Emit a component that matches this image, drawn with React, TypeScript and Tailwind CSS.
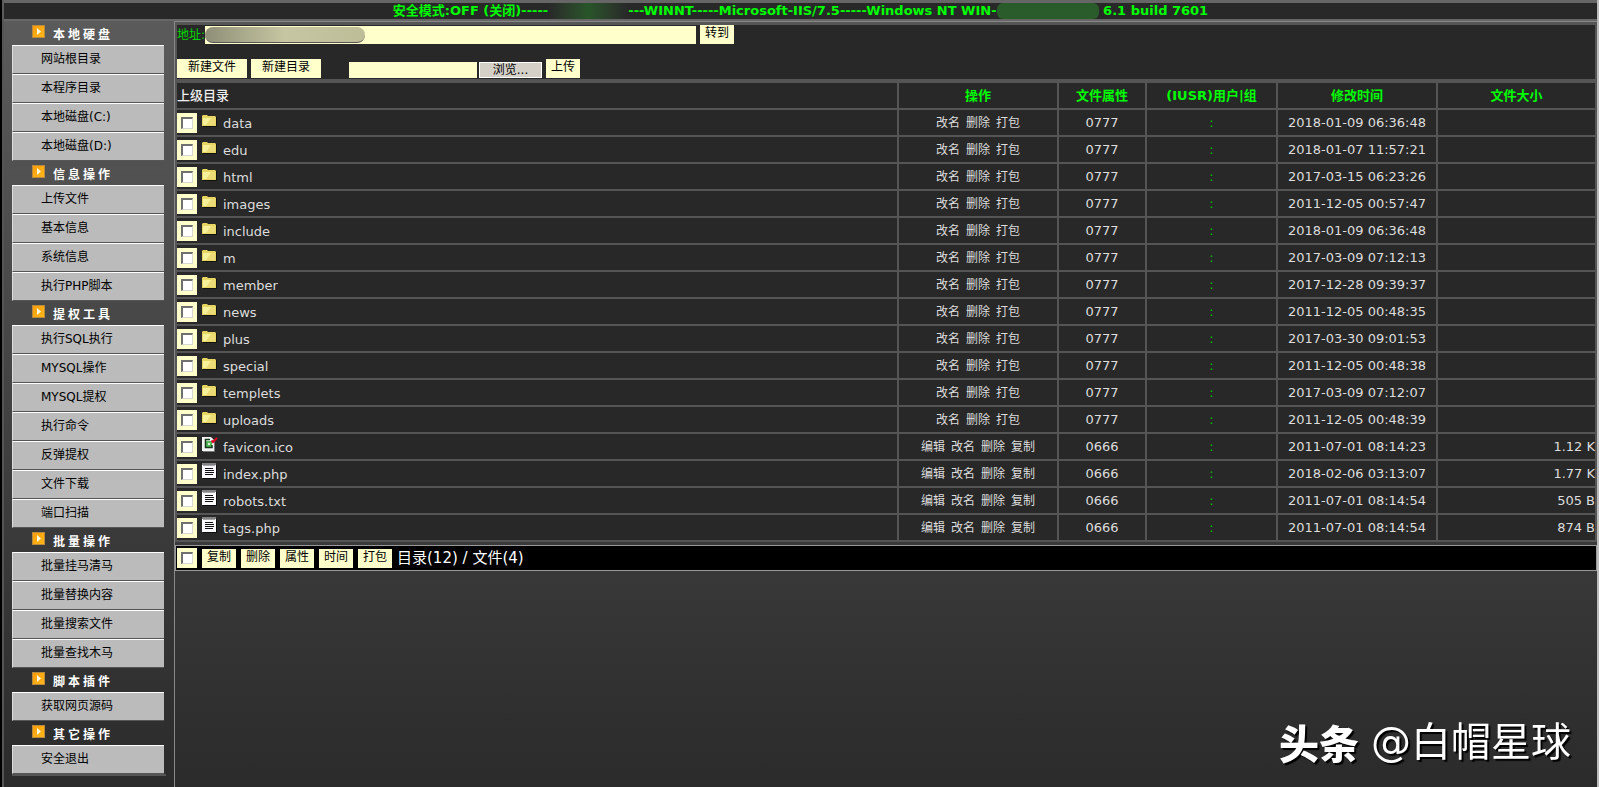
import { useState } from 'react'

const MENU = [
  { title: '本地硬盘', items: ['网站根目录', '本程序目录', '本地磁盘(C:)', '本地磁盘(D:)'] },
  { title: '信息操作', items: ['上传文件', '基本信息', '系统信息', '执行PHP脚本'] },
  {
    title: '提权工具',
    items: ['执行SQL执行', 'MYSQL操作', 'MYSQL提权', '执行命令', '反弹提权', '文件下载', '端口扫描'],
  },
  { title: '批量操作', items: ['批量挂马清马', '批量替换内容', '批量搜索文件', '批量查找木马'] },
  { title: '脚本插件', items: ['获取网页源码'] },
  { title: '其它操作', items: ['安全退出'] },
]

type Kind = 'dir' | 'ico' | 'text'

interface Entry {
  name: string
  kind: Kind
  time: string
  size?: string
}

const ENTRIES: Entry[] = [
  { name: 'data', kind: 'dir', time: '2018-01-09 06:36:48' },
  { name: 'edu', kind: 'dir', time: '2018-01-07 11:57:21' },
  { name: 'html', kind: 'dir', time: '2017-03-15 06:23:26' },
  { name: 'images', kind: 'dir', time: '2011-12-05 00:57:47' },
  { name: 'include', kind: 'dir', time: '2018-01-09 06:36:48' },
  { name: 'm', kind: 'dir', time: '2017-03-09 07:12:13' },
  { name: 'member', kind: 'dir', time: '2017-12-28 09:39:37' },
  { name: 'news', kind: 'dir', time: '2011-12-05 00:48:35' },
  { name: 'plus', kind: 'dir', time: '2017-03-30 09:01:53' },
  { name: 'special', kind: 'dir', time: '2011-12-05 00:48:38' },
  { name: 'templets', kind: 'dir', time: '2017-03-09 07:12:07' },
  { name: 'uploads', kind: 'dir', time: '2011-12-05 00:48:39' },
  { name: 'favicon.ico', kind: 'ico', time: '2011-07-01 08:14:23', size: '1.12 K' },
  { name: 'index.php', kind: 'text', time: '2018-02-06 03:13:07', size: '1.77 K' },
  { name: 'robots.txt', kind: 'text', time: '2011-07-01 08:14:54', size: '505 B' },
  { name: 'tags.php', kind: 'text', time: '2011-07-01 08:14:54', size: '874 B' },
]

const DIR_ACTIONS = ['改名', '删除', '打包']
const FILE_ACTIONS = ['编辑', '改名', '删除', '复制']

function ArrowIcon() {
  return (
    <svg className="w-[13px] h-[13px] shrink-0" viewBox="0 0 13 13" aria-hidden="true">
      <defs>
        <linearGradient id="arrow-fill" x1="0" y1="0" x2="1" y2="1">
          <stop offset="0" stopColor="#ff9c08" />
          <stop offset="1" stopColor="#ffb91c" />
        </linearGradient>
      </defs>
      <rect x="0.5" y="0.5" width="12" height="12" fill="url(#arrow-fill)" stroke="#b98a3c" />
      <path d="M5 3v7l4-3.5z" fill="#fffbe0" />
    </svg>
  )
}

function EntryIcon({ kind }: { kind: Kind }) {
  if (kind === 'dir') {
    return (
      <svg className="w-4 h-4 mt-px shrink-0 self-start" viewBox="0 0 16 16" aria-hidden="true">
        <path d="M1 14.500h13.500V5" fill="none" stroke="#111" />
        <path d="M0 4l1-1h4l1 1h7l1 1v9H0z" fill="#e6d560" />
        <path d="M1 6h12v7H1z" fill="#f8f19b" />
        <path d="M9 6h4v7H4z" fill="#ecdc78" />
      </svg>
    )
  }
  if (kind === 'ico') {
    return (
      <svg className="w-4 h-4 mt-px shrink-0 self-start" viewBox="0 0 16 16" aria-hidden="true">
        <path d="M0 1h9l3 3v11H0z" fill="#f4f4f4" />
        <path d="M12.500 5v10.500H1" fill="none" stroke="#777" />
        <path d="M4 5h6v6H4z" fill="#58b85c" />
        <path d="M8 3.500H3.500v8H10V9" fill="none" stroke="#153b1a" strokeWidth="1.500" />
        <path d="M6 7h2v2H6z" fill="#d9f3da" />
        <path d="M9.500 4.500l1.500 1.500L15 2" fill="none" stroke="#e00020" strokeWidth="2" />
      </svg>
    )
  }
  return (
    <svg className="w-4 h-4 mt-px shrink-0 self-start" viewBox="0 0 16 16" aria-hidden="true">
      <path d="M1 15.500h13.500V2" fill="none" stroke="#0d0d0d" />
      <path d="M0 2h14v13H0z" fill="#fafaff" />
      <path d="M1 0v2M3 0v2M5 0v2M7 0v2M9 0v2M11 0v2M13 0v2" stroke="#ddd" />
      <path d="M2 2v1M4 2v1M6 2v1M8 2v1M10 2v1M12 2v1" stroke="#555" />
      <path d="M3 5.500h8M3 7.500h9M3 9.500h9M3 11.500h8" stroke="#111" />
    </svg>
  )
}

function Tick({ label, ...rest }: { label: string; checked: boolean; onChange: () => void }) {
  return (
    <label className="w-5 h-5 shrink-0 bg-[#ffffcc] flex items-center justify-center">
      <input
        type="checkbox"
        aria-label={label}
        className="appearance-none w-3 h-3 bg-white border border-t-2 border-l-2 border-t-[#707070] border-l-[#707070] border-r-[#d8d8d0] border-b-[#d8d8d0] checked:bg-[#333]"
        {...rest}
      />
    </label>
  )
}

function CreamButton({ children, wide }: { children: string; wide?: boolean }) {
  return (
    <button
      className={`${wide ? 'w-[70px]' : 'w-[34px]'} h-[19px] shrink-0 bg-[#ffffcc] text-black text-xs leading-4 pb-[3px]`}
    >
      {children}
    </button>
  )
}

function Sidebar() {
  return (
    <nav className="w-[170px] shrink-0 px-2">
      {MENU.map((group) => (
        <section key={group.title} className="last:border-b-2 border-[#555]">
          <h2 className="h-6 flex items-start gap-2 pl-5 pt-1 text-white text-xs font-bold tracking-[3px]">
            <ArrowIcon />
            <span className="leading-5">{group.title}</span>
          </h2>
          {group.items.map((item) => (
            <a
              key={item}
              href="#"
              className="block h-[29px] w-[152px] pl-7 bg-[#bbb] border-t border-t-white border-l border-l-[#ddd] border-b border-b-[#555] text-black text-xs leading-[27px]"
            >
              {item}
            </a>
          ))}
        </section>
      ))}
    </nav>
  )
}

function FileTable({ picked, toggle }: { picked: string[]; toggle: (name: string) => void }) {
  const head = 'border-l-2 border-[#555] text-[#00ff00] text-[13px] font-bold p-0'
  const cell = 'border-l-2 border-[#555] text-center'
  return (
    <table className="w-full table-fixed border-separate border-spacing-0 bg-[#282828]">
      <colgroup>
        <col />
        <col className="w-[160px]" />
        <col className="w-[88px]" />
        <col className="w-[131px]" />
        <col className="w-[160px]" />
        <col className="w-[159px]" />
      </colgroup>
      <thead>
        <tr className="h-[27px] [&>th]:border-b-2">
          <th className="border-[#555] text-left text-[13px] font-medium">
            <a href="#" className="text-[#eee]">上级目录</a>
          </th>
          <th className={head}>操作</th>
          <th className={head}>文件属性</th>
          <th className={head}>(IUSR)用户|组</th>
          <th className={head}>修改时间</th>
          <th className={head}>文件大小</th>
        </tr>
      </thead>
      <tbody>
        {ENTRIES.map((entry) => (
          <tr key={entry.name} className="h-[27px] [&>td]:border-b-2 [&>td]:p-0">
            <td className="border-[#555]">
              <div className="flex items-center gap-[5px]">
                <Tick
                  label={entry.name}
                  checked={picked.includes(entry.name)}
                  onChange={() => toggle(entry.name)}
                />
                <EntryIcon kind={entry.kind} />
                <a href="#" className="leading-5 pt-[3px]">{entry.name}</a>
              </div>
            </td>
            <td className={cell}>
              <div className="flex justify-center gap-[6px] text-xs">
                {(entry.kind === 'dir' ? DIR_ACTIONS : FILE_ACTIONS).map((action) => (
                  <a key={action} href="#">{action}</a>
                ))}
              </div>
            </td>
            <td className={cell}>{entry.kind === 'dir' ? '0777' : '0666'}</td>
            <td className={`${cell} text-[#00c000]`}>:</td>
            <td className={cell}>{entry.time}</td>
            <td className="border-l-2 border-[#555] text-right">{entry.size}</td>
          </tr>
        ))}
      </tbody>
    </table>
  )
}

export default function App() {
  const [picked, setPicked] = useState<string[]>([])

  const toggle = (name: string) =>
    setPicked((prev) => (prev.includes(name) ? prev.filter((n) => n !== name) : [...prev, name]))
  const toggleAll = () =>
    setPicked((prev) => (prev.length === ENTRIES.length ? [] : ENTRIES.map((e) => e.name)))

  return (
    <div className="min-h-screen flex flex-col bg-linear-to-b from-[#5c5c5c] to-[#2b2b2b] border-l-2 border-l-black border-r-2 border-r-[#bbb] text-[#ddd] text-[13px] font-['DejaVu_Sans','Noto_Sans_CJK_SC',sans-serif]">
      {/* Server summary */}
      <header className="h-[21px] ml-[2px] flex items-center justify-center whitespace-pre border-t-3 border-b-2 border-[#666] bg-[#282828] text-[#00ff00] text-[13px] leading-4 font-bold">
        <span>安全模式:OFF (关闭)-----</span>
        <span className="w-[80px] h-4 bg-linear-to-r from-[#282828] via-[#28552a] to-[#282828]" />
        <span>---WINNT-----Microsoft-IIS/7.5-----Windows NT WIN-</span>
        <span className="w-[102px] h-4 rounded-md bg-[#295c2a]" />
        <span> 6.1 build 7601</span>
      </header>

      <div className="flex flex-1 border-l-2 border-[#555]">
        <Sidebar />

        <main className="flex-1 min-w-0 flex flex-col border-l border-t border-[#888]">
          <div className="border-2 border-t-3 border-b-0 border-[#555] bg-[#282828]">
            <form className="h-[54px]" onSubmit={(e) => e.preventDefault()}>
              <div className="flex items-start gap-1">
                <div className="relative flex">
                  <label htmlFor="path" className="w-7 text-xs leading-5 text-[#00d800] whitespace-nowrap">地址:</label>
                  <input id="path" className="w-[491px] h-[18px] mt-px bg-[#ffffcc] text-black" />
                  <span className="absolute left-7 top-[2px] w-[160px] h-4 rounded-lg bg-linear-to-r from-[#8f8f78] via-[#c6c6a2] to-[#bdbd98] border-b border-[#555]" />
                </div>
                <CreamButton>转到</CreamButton>
              </div>
              <div className="flex items-end gap-1 pt-[14px]">
                <CreamButton wide>新建文件</CreamButton>
                <CreamButton wide>新建目录</CreamButton>
                <input aria-label="上传文件" className="ml-6 w-[128px] h-4 bg-[#ffffcc] text-black" />
                <button type="button" className="-ml-[2px] w-[63px] h-4 bg-[#d4d0c8] border border-white text-black text-xs leading-3">
                  浏览...
                </button>
                <CreamButton>上传</CreamButton>
              </div>
            </form>
          </div>
          <div className="border-2 border-t-4 border-b-0 border-[#555]">
            <FileTable picked={picked} toggle={toggle} />
          </div>

          {/* Bulk actions */}
          <div className="mt-[3px] h-[26px] flex items-center gap-[5px] pl-px bg-black border border-[#999] text-white">
            <Tick label="全选" checked={picked.length === ENTRIES.length} onChange={toggleAll} />
            <CreamButton>复制</CreamButton>
            <CreamButton>删除</CreamButton>
            <CreamButton>属性</CreamButton>
            <CreamButton>时间</CreamButton>
            <CreamButton>打包</CreamButton>
            <span className="text-[15px] leading-5">目录(12) / 文件(4)</span>
          </div>
        </main>
      </div>

      <div className="fixed right-7 bottom-5 flex items-center gap-3 text-white [text-shadow:2px_2px_1px_#000] text-[40px] leading-[50px]">
        <b className="font-black font-['Noto_Sans_CJK_SC',sans-serif]">头条</b>
        <span>@白帽星球</span>
      </div>
    </div>
  )
}
